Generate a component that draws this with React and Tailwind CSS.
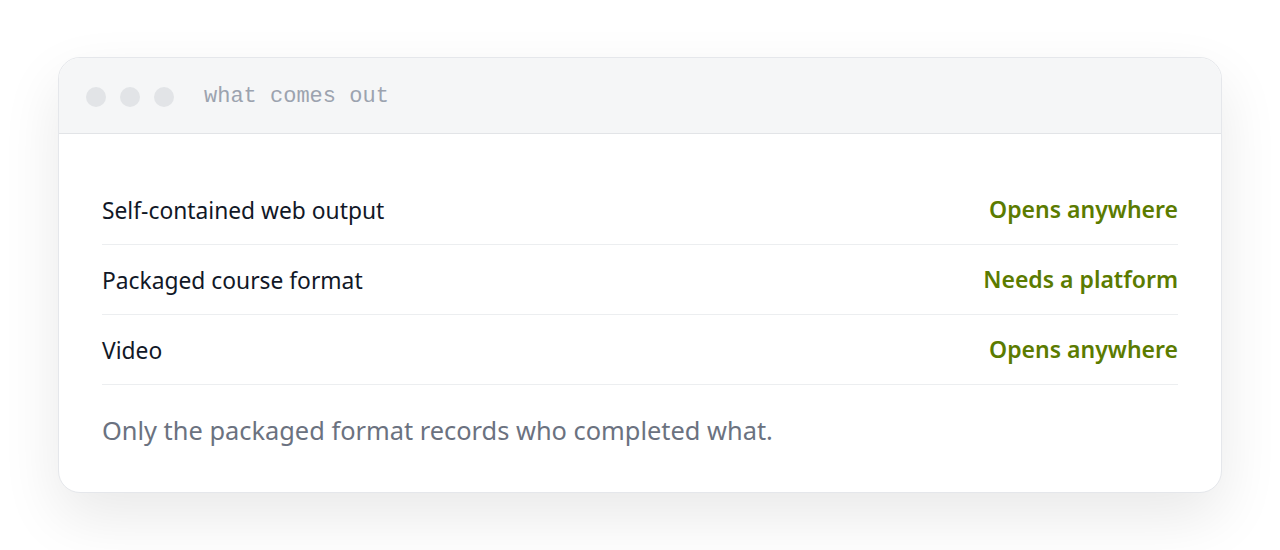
const rows = [
  { label: 'Self-contained web output', value: 'Opens anywhere' },
  { label: 'Packaged course format', value: 'Needs a platform' },
  { label: 'Video', value: 'Opens anywhere' },
]

export default function App() {
  return (
    <div className="w-[1280px] h-[550px] bg-white px-[58px] pt-[57px]" style={{ fontFamily: '"Noto Sans", "Open Sans", sans-serif' }}>
      <div className="rounded-[22px] border border-[#e5e7eb] bg-white overflow-hidden shadow-[0_24px_60px_rgba(0,0,0,0.09)]">
        {/* title bar */}
        <div className="flex items-center h-[76px] bg-[#f5f6f7] border-b border-[#e2e4e7] pl-[27px] pt-[2px]">
          <div className="flex gap-[14px]">
            <span className="w-[20px] h-[20px] rounded-full bg-[#e2e4e7]" />
            <span className="w-[20px] h-[20px] rounded-full bg-[#e2e4e7]" />
            <span className="w-[20px] h-[20px] rounded-full bg-[#e2e4e7]" />
          </div>
          <span className="ml-[30px] text-[22px] text-[#9ca3af]" style={{ fontFamily: '"Liberation Mono", "DejaVu Sans Mono", monospace' }}>
            what comes out
          </span>
        </div>

        {/* body */}
        <div className="px-[43px] pt-[41px] pb-[44px]">
          {rows.map(r => (
            <div key={r.label} className="flex justify-between items-center h-[70px] border-b border-[#eceef0]">
              <span className="mt-[4px] text-[22.8px] text-[#111827]">{r.label}</span>
              <span className="text-[23px] font-semibold text-[#5b7b00]">{r.value}</span>
            </div>
          ))}
          <p className="mt-[27px] text-[25.4px] leading-[36px] text-[#6b7280]">
            Only the packaged format records who completed what.
          </p>
        </div>
      </div>
    </div>
  )
}
